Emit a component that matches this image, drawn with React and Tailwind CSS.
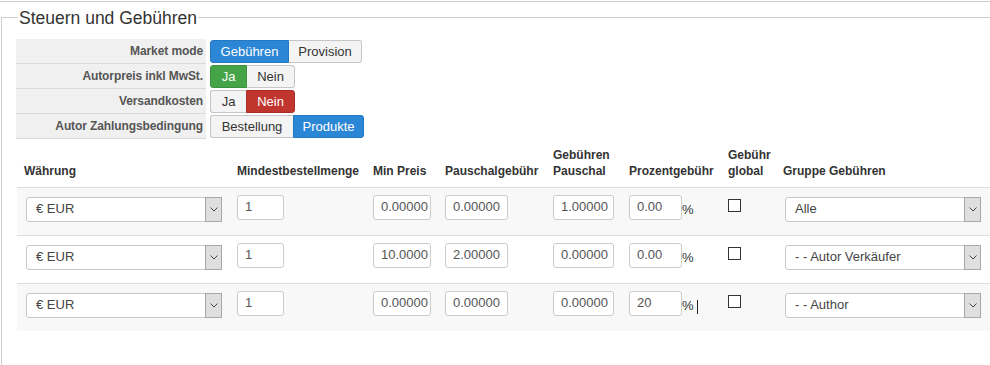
import React from 'react';

const font = "font-['Liberation_Sans',Arial,sans-serif]";

const settings = [
    {
        label: 'Market mode',
        options: [
            { text: 'Gebühren', w: 'w-[79px]', active: 'bg-[#2b86d6] border-[#2478c2] text-white' },
            { text: 'Provision', w: 'w-[73px]' },
        ],
    },
    {
        label: 'Autorpreis inkl MwSt.',
        options: [
            { text: 'Ja', w: 'w-[37px]', active: 'bg-[#45a447] border-[#3b9340] text-white' },
            { text: 'Nein', w: 'w-[48px]' },
        ],
    },
    {
        label: 'Versandkosten',
        options: [
            { text: 'Ja', w: 'w-[36px]' },
            { text: 'Nein', w: 'w-[49px]', active: 'bg-[#c1352f] border-[#a92d28] text-white' },
        ],
    },
    {
        label: 'Autor Zahlungsbedingung',
        options: [
            { text: 'Bestellung', w: 'w-[83px]' },
            { text: 'Produkte', w: 'w-[71px]', active: 'bg-[#2b86d6] border-[#2478c2] text-white' },
        ],
    },
];

const rows = [
    { qty: '1', min: '0.00000', flat: '0.00000', feeFlat: '1.00000', pct: '0.00', group: 'Alle', bg: 'bg-[#f8f8f8]' },
    { qty: '1', min: '10.0000', flat: '2.00000', feeFlat: '0.00000', pct: '0.00', group: '- - Autor Verkäufer', bg: 'bg-white' },
    { qty: '1', min: '0.00000', flat: '0.00000', feeFlat: '0.00000', pct: '20', group: '- - Author', bg: 'bg-[#f8f8f8]', caret: true },
];

const cols = 'grid grid-cols-[213px_136px_72px_108px_76px_99px_55px_1fr]';

const Segmented = ({ options }) => (
    <div className="flex mt-px h-[23px]">
        {options.map((o, i) => (
            <div
                key={o.text}
                className={`${o.w} flex items-center justify-center text-[13px] border ${
                    o.active ? o.active : 'bg-[#f4f4f4] border-[#c6c6c6] text-[#333]'
                } ${i === 0 ? 'rounded-l-[3px]' : 'rounded-r-[3px]'} ${i === 0 && !o.active ? 'border-r-0' : ''} ${
                    i === 1 && !o.active ? 'border-l-0' : ''
                }`}
            >
                {o.text}
            </div>
        ))}
    </div>
);

const Select = ({ value }) => (
    <div className="mt-[2px] w-[196px] h-[25px] flex border border-[#c8c8c8] rounded-[3px] bg-white">
        <div className="flex-1 flex items-center pl-[9px] pb-px text-[13px] text-[#444]">{value}</div>
        <div className="w-[17px] -my-px -mr-px flex items-center justify-center bg-[#dfdfdf] border border-[#a8a8a8]">
            <svg width="8" height="5" viewBox="0 0 8 5">
                <path d="M0.5 0.5 L4 4 L7.5 0.5" fill="none" stroke="#444" strokeWidth="1" />
            </svg>
        </div>
    </div>
);

const Input = ({ value, w }) => (
    <div className={`${w} h-[25px] flex items-center pl-[7px] pb-[2px] border border-[#cccccc] rounded-[3px] bg-white text-[13px] text-[#555] overflow-hidden whitespace-nowrap`}>
        {value}
    </div>
);

const App = () => {
    return (
        <div className={`w-[990px] h-[365px] overflow-hidden bg-white text-[#333] ${font}`}>
            <div className="mt-px h-px bg-[#cfcfcf]" />

            {/* Fieldset */}
            <div className="relative mt-[15px] ml-px h-[348px] border-l border-t border-[#cfcfcf] pt-[21px] pl-[14px]">
                <div className="absolute left-[16px] top-[-11px] bg-white px-px text-[17.5px] leading-[22px] text-[#333]">
                    Steuern und Gebühren
                </div>

                {/* Settings */}
                <div className="flex flex-col">
                    {settings.map((s) => (
                        <div key={s.label} className="flex h-[25px]">
                            <div className="w-[190px] h-[25px] flex items-center justify-end pr-[3px] pb-px bg-[#f0f0f0] border-b border-[#dadada] text-[12px] font-bold text-[#555] tracking-[-0.1px]">
                                {s.label}
                            </div>
                            <div className="pl-[4px]">
                                <Segmented options={s.options} />
                            </div>
                        </div>
                    ))}
                </div>

                {/* Table */}
                <div className="ml-px">
                    <div className={`${cols} h-[48px] items-end pb-[8px] text-[12px] leading-[16px] font-bold text-[#333]`}>
                        <div className="pl-[7px]">Währung</div>
                        <div className="pl-[7px]">Mindestbestellmenge</div>
                        <div className="pl-[7px]">Min Preis</div>
                        <div className="pl-[7px]">Pauschalgebühr</div>
                        <div className="pl-[7px]">Gebühren<br />Pauschal</div>
                        <div className="pl-[7px]">Prozentgebühr</div>
                        <div className="pl-[7px]">Gebühr<br />global</div>
                        <div className="pl-[7px]">Gruppe Gebühren</div>
                    </div>

                    {rows.map((r, i) => (
                        <div key={i} className={`${cols} ${r.bg} h-[48px] items-start pt-[7px] border-t border-[#dddddd]`}>
                            <div className="pl-[9px]">
                                <Select value="€ EUR" />
                            </div>
                            <div className="pl-[7px]">
                                <Input value={r.qty} w="w-[47px]" />
                            </div>
                            <div className="pl-[7px]">
                                <Input value={r.min} w="w-[58px]" />
                            </div>
                            <div className="pl-[7px]">
                                <Input value={r.flat} w="w-[63px]" />
                            </div>
                            <div className="pl-[7px]">
                                <Input value={r.feeFlat} w="w-[61px]" />
                            </div>
                            <div className="pl-[7px] flex items-start">
                                <Input value={r.pct} w="w-[53px]" />
                                <span className="pt-[2px] text-[13px] leading-[25px] text-[#333]">%</span>
                                {r.caret && <span className="mt-[9px] ml-[3px] w-px h-[14px] bg-[#222]" />}
                            </div>
                            <div className="pl-[7px]">
                                <div className="mt-[4px] w-[13px] h-[13px] border border-[#333] bg-white" />
                            </div>
                            <div className="pl-[9px]">
                                <Select value={r.group} />
                            </div>
                        </div>
                    ))}
                </div>
            </div>
        </div>
    );
};

export default App;
